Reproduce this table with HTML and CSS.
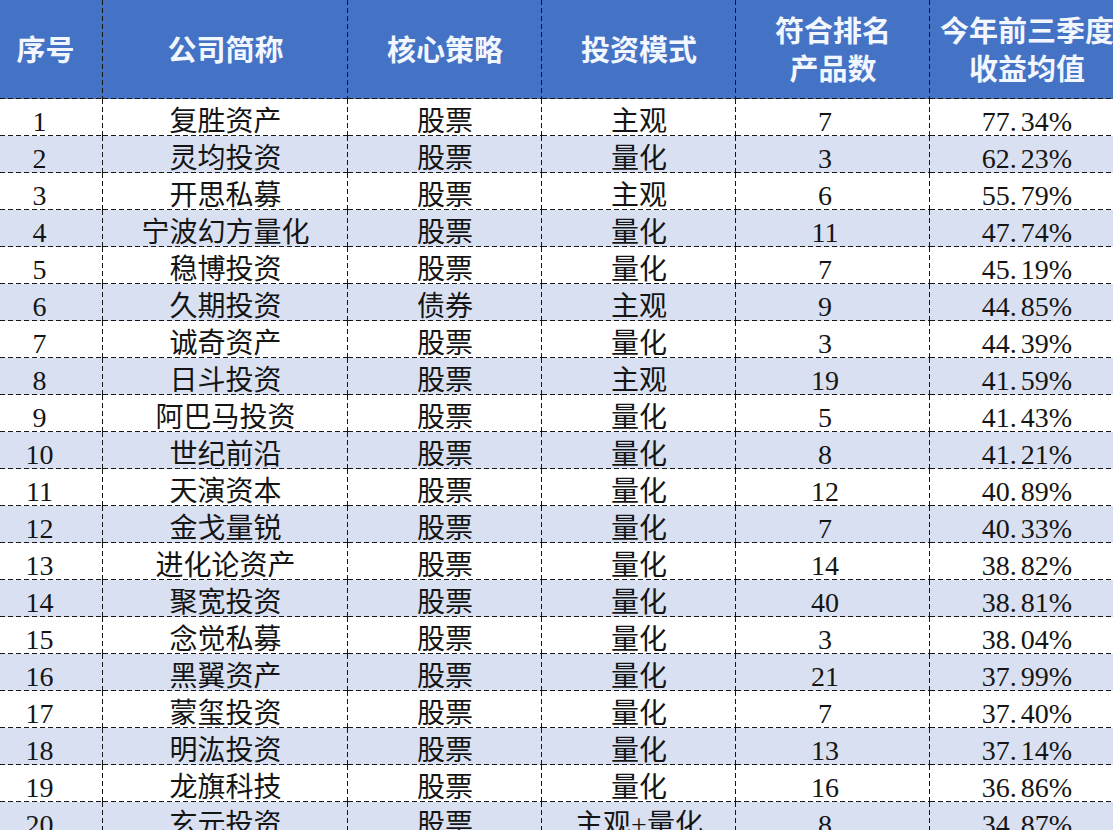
FILE: index.html
```html
<!DOCTYPE html>
<html lang="zh-CN">
<head>
<meta charset="utf-8">
<title>私募排名</title>
<link rel="stylesheet" href="styles.css">
</head>
<body>
<table class="rank">
  <colgroup>
    <col class="c1"><col class="c2"><col class="c3"><col class="c4"><col class="c5"><col class="c6">
  </colgroup>
  <thead>
    <tr class="head">
      <th class="idx">序号</th>
      <th>公司简称</th>
      <th>核心策略</th>
      <th>投资模式</th>
      <th>符合排名<br>产品数</th>
      <th>今年前三季度<br>收益均值</th>
    </tr>
  </thead>
  <tbody>
    <tr><td class="idx">1</td><td>复胜资产</td><td>股票</td><td>主观</td><td class="cnt">7</td><td>77<span class="pt">.</span>34%</td></tr>
    <tr><td class="idx">2</td><td>灵均投资</td><td>股票</td><td>量化</td><td class="cnt">3</td><td>62<span class="pt">.</span>23%</td></tr>
    <tr><td class="idx">3</td><td>开思私募</td><td>股票</td><td>主观</td><td class="cnt">6</td><td>55<span class="pt">.</span>79%</td></tr>
    <tr><td class="idx">4</td><td>宁波幻方量化</td><td>股票</td><td>量化</td><td class="cnt">11</td><td>47<span class="pt">.</span>74%</td></tr>
    <tr><td class="idx">5</td><td>稳博投资</td><td>股票</td><td>量化</td><td class="cnt">7</td><td>45<span class="pt">.</span>19%</td></tr>
    <tr><td class="idx">6</td><td>久期投资</td><td>债券</td><td>主观</td><td class="cnt">9</td><td>44<span class="pt">.</span>85%</td></tr>
    <tr><td class="idx">7</td><td>诚奇资产</td><td>股票</td><td>量化</td><td class="cnt">3</td><td>44<span class="pt">.</span>39%</td></tr>
    <tr><td class="idx">8</td><td>日斗投资</td><td>股票</td><td>主观</td><td class="cnt">19</td><td>41<span class="pt">.</span>59%</td></tr>
    <tr><td class="idx">9</td><td>阿巴马投资</td><td>股票</td><td>量化</td><td class="cnt">5</td><td>41<span class="pt">.</span>43%</td></tr>
    <tr><td class="idx">10</td><td>世纪前沿</td><td>股票</td><td>量化</td><td class="cnt">8</td><td>41<span class="pt">.</span>21%</td></tr>
    <tr><td class="idx">11</td><td>天演资本</td><td>股票</td><td>量化</td><td class="cnt">12</td><td>40<span class="pt">.</span>89%</td></tr>
    <tr><td class="idx">12</td><td>金戈量锐</td><td>股票</td><td>量化</td><td class="cnt">7</td><td>40<span class="pt">.</span>33%</td></tr>
    <tr><td class="idx">13</td><td>进化论资产</td><td>股票</td><td>量化</td><td class="cnt">14</td><td>38<span class="pt">.</span>82%</td></tr>
    <tr><td class="idx">14</td><td>聚宽投资</td><td>股票</td><td>量化</td><td class="cnt">40</td><td>38<span class="pt">.</span>81%</td></tr>
    <tr><td class="idx">15</td><td>念觉私募</td><td>股票</td><td>量化</td><td class="cnt">3</td><td>38<span class="pt">.</span>04%</td></tr>
    <tr><td class="idx">16</td><td>黑翼资产</td><td>股票</td><td>量化</td><td class="cnt">21</td><td>37<span class="pt">.</span>99%</td></tr>
    <tr><td class="idx">17</td><td>蒙玺投资</td><td>股票</td><td>量化</td><td class="cnt">7</td><td>37<span class="pt">.</span>40%</td></tr>
    <tr><td class="idx">18</td><td>明汯投资</td><td>股票</td><td>量化</td><td class="cnt">13</td><td>37<span class="pt">.</span>14%</td></tr>
    <tr><td class="idx">19</td><td>龙旗科技</td><td>股票</td><td>量化</td><td class="cnt">16</td><td>36<span class="pt">.</span>86%</td></tr>
    <tr><td class="idx">20</td><td>玄元投资</td><td>股票</td><td>主观+量化</td><td class="cnt">8</td><td>34<span class="pt">.</span>87%</td></tr>
  </tbody>
</table>
</body>
</html>
```

FILE: styles.css
```css
html, body {
  margin: 0;
  padding: 0;
  overflow: hidden;
  background: #ffffff;
}

.rank {
  border-collapse: collapse;
  border-spacing: 0;
  table-layout: fixed;
  width: 1124px;
  font-family: "Liberation Serif", "Noto Sans CJK SC", serif;
  color: #151515;
}

.c1 { width: 103px; }
.c2 { width: 245px; }
.c3 { width: 194px; }
.c4 { width: 194px; }
.c5 { width: 194px; }
.c6 { width: 194px; }

.rank th,
.rank td {
  border: none;
  text-align: center;
  white-space: nowrap;
  padding: 0;
  box-sizing: border-box;
  background-image:
    repeating-linear-gradient(to right, #161616 0 5px, transparent 5px 8px),
    repeating-linear-gradient(to bottom, #161616 0 5px, transparent 5px 8px);
  background-size: 100% 1px, 1px 100%;
  background-position: left bottom, right top;
  background-repeat: no-repeat;
}

.head th {
  height: 99px;
  background-color: #4472c4;
  color: #f2f6ff;
  font-family: "Noto Sans CJK SC", sans-serif;
  font-weight: 700;
  font-size: 29px;
  line-height: 38px;
  padding-bottom: 4px;
}

.head th.idx {
  padding-right: 12px;
}

.rank tbody tr:nth-child(even) td {
  background-color: #d9e0f2;
}

.rank td {
  height: 37px;
  font-size: 28px;
  line-height: 28px;
  padding-top: 9px;
  vertical-align: top;
}

.rank td.idx {
  padding-right: 24px;
}

.rank td.cnt {
  padding-right: 16px;
}

.pt {
  margin-right: 4px;
}
```
